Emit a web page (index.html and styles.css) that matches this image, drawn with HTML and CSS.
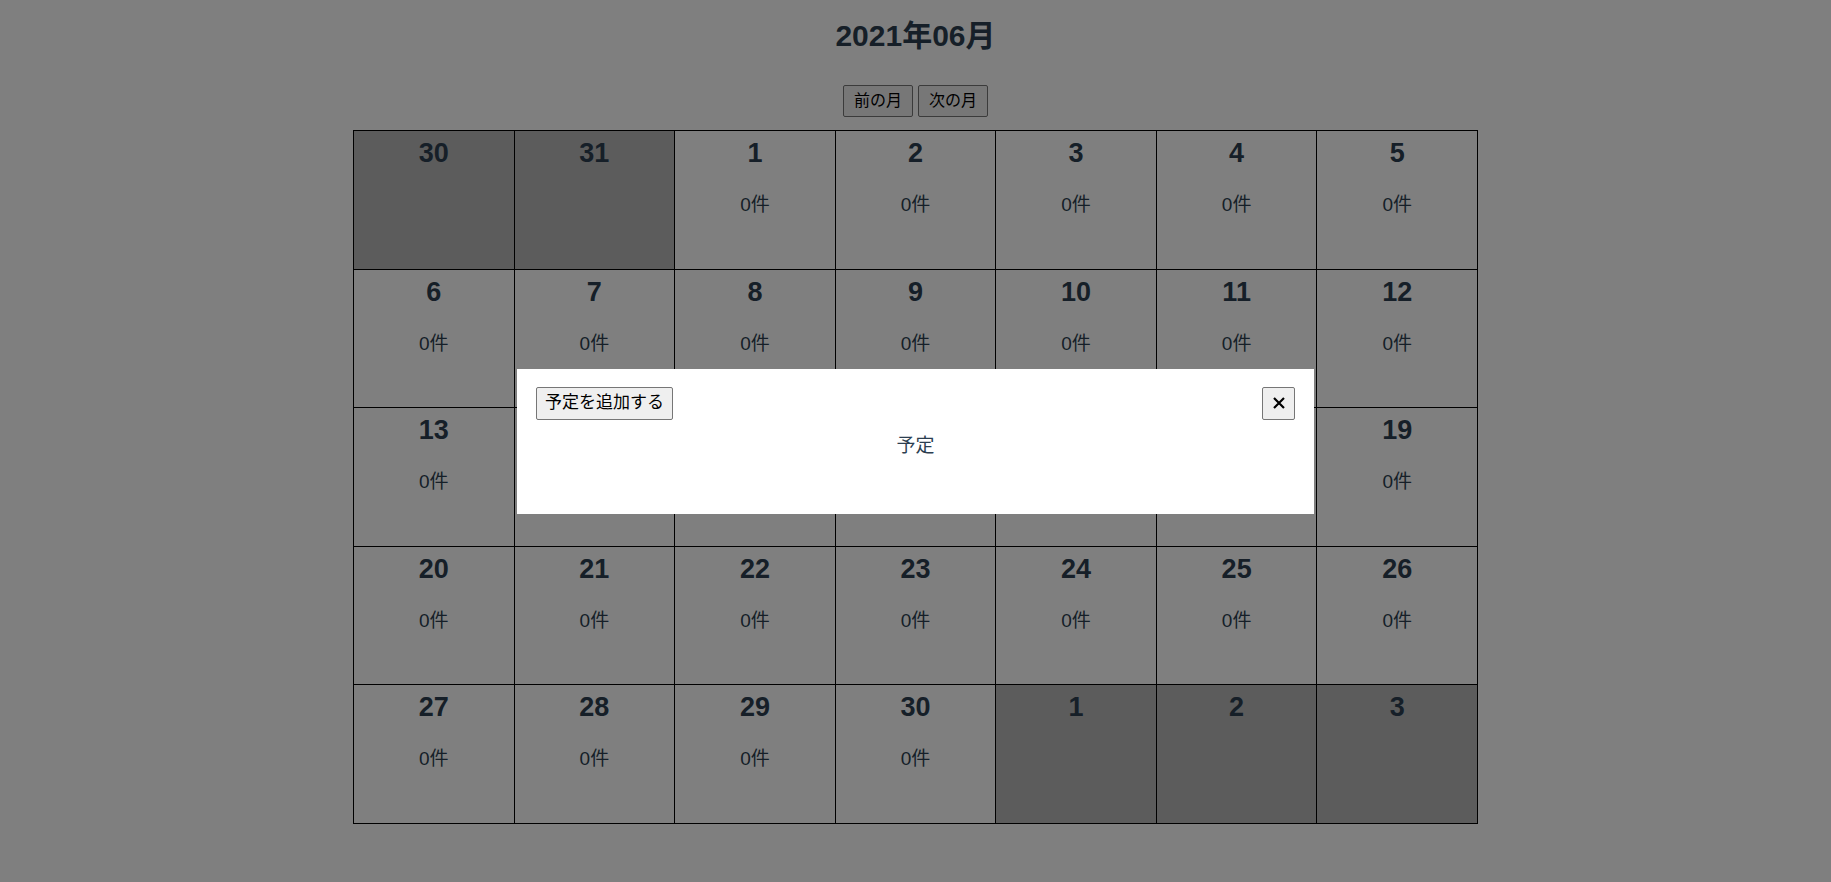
FILE: index.html
```html
<!DOCTYPE html>
<html lang="ja">
<head>
<meta charset="utf-8">
<title>カレンダー</title>
<link rel="stylesheet" href="styles.css">
</head>
<body>
<div class="app">
  <h1 class="title">2021年06月</h1>
  <div class="nav">
    <button class="nav-btn">前の月</button>
    <button class="nav-btn">次の月</button>
  </div>
  <div class="calendar">
    <div class="cell out"><div class="day">30</div></div>
    <div class="cell out"><div class="day">31</div></div>
    <div class="cell"><div class="day">1</div><div class="count">0件</div></div>
    <div class="cell"><div class="day">2</div><div class="count">0件</div></div>
    <div class="cell"><div class="day">3</div><div class="count">0件</div></div>
    <div class="cell"><div class="day">4</div><div class="count">0件</div></div>
    <div class="cell"><div class="day">5</div><div class="count">0件</div></div>

    <div class="cell"><div class="day">6</div><div class="count">0件</div></div>
    <div class="cell"><div class="day">7</div><div class="count">0件</div></div>
    <div class="cell"><div class="day">8</div><div class="count">0件</div></div>
    <div class="cell"><div class="day">9</div><div class="count">0件</div></div>
    <div class="cell"><div class="day">10</div><div class="count">0件</div></div>
    <div class="cell"><div class="day">11</div><div class="count">0件</div></div>
    <div class="cell"><div class="day">12</div><div class="count">0件</div></div>

    <div class="cell"><div class="day">13</div><div class="count">0件</div></div>
    <div class="cell"><div class="day">14</div><div class="count">0件</div></div>
    <div class="cell"><div class="day">15</div><div class="count">0件</div></div>
    <div class="cell"><div class="day">16</div><div class="count">0件</div></div>
    <div class="cell"><div class="day">17</div><div class="count">0件</div></div>
    <div class="cell"><div class="day">18</div><div class="count">0件</div></div>
    <div class="cell"><div class="day">19</div><div class="count">0件</div></div>

    <div class="cell"><div class="day">20</div><div class="count">0件</div></div>
    <div class="cell"><div class="day">21</div><div class="count">0件</div></div>
    <div class="cell"><div class="day">22</div><div class="count">0件</div></div>
    <div class="cell"><div class="day">23</div><div class="count">0件</div></div>
    <div class="cell"><div class="day">24</div><div class="count">0件</div></div>
    <div class="cell"><div class="day">25</div><div class="count">0件</div></div>
    <div class="cell"><div class="day">26</div><div class="count">0件</div></div>

    <div class="cell"><div class="day">27</div><div class="count">0件</div></div>
    <div class="cell"><div class="day">28</div><div class="count">0件</div></div>
    <div class="cell"><div class="day">29</div><div class="count">0件</div></div>
    <div class="cell"><div class="day">30</div><div class="count">0件</div></div>
    <div class="cell out"><div class="day">1</div></div>
    <div class="cell out"><div class="day">2</div></div>
    <div class="cell out"><div class="day">3</div></div>
  </div>
</div>

<div class="overlay">
  <div class="modal">
    <div class="modal-head">
      <button class="modal-btn">予定を追加する</button>
      <button class="modal-btn close" aria-label="閉じる"><svg width="14" height="14" viewBox="0 0 14 14"><path d="M2 2 L12 12 M12 2 L2 12" stroke="#000" stroke-width="2.2" fill="none"/></svg></button>
    </div>
    <div class="modal-body">予定</div>
  </div>
</div>
</body>
</html>
```

FILE: styles.css
```css
html, body {
  margin: 0;
  padding: 0;
  background: #ffffff;
}
body {
  font-family: "Liberation Sans", Arial, "Noto Sans CJK JP", sans-serif;
  color: #2c3e50;
}
.app {
  text-align: center;
  padding-top: 19px;
}
.title {
  margin: 0;
  font-size: 30px;
  line-height: 34px;
  font-weight: bold;
}
.nav {
  display: flex;
  justify-content: center;
  gap: 5px;
  margin-top: 32px;
}
.nav-btn, .modal-btn {
  font-family: "Liberation Sans", Arial, "Noto Sans CJK JP", sans-serif;
  font-size: 16px;
  color: #000;
  background: #efefef;
  border: 1px solid #767676;
  border-radius: 2px;
  padding: 0 10px;
  height: 32px;
  line-height: 30px;
}
.calendar {
  width: 1123px;
  margin: 13px auto 0;
  display: grid;
  grid-template-columns: repeat(7, 1fr);
  grid-auto-rows: 137.6px;
  gap: 1px;
  background: #000;
  border: 1px solid #000;
}
.cell {
  background: #ffffff;
  padding-top: 7px;
}
.cell.out {
  background: #b8b8b8;
}
.day {
  font-size: 27px;
  font-weight: bold;
  line-height: 31px;
}
.count {
  font-size: 19px;
  line-height: 24px;
  margin-top: 24px;
}
.overlay {
  position: fixed;
  inset: 0;
  background: rgba(0, 0, 0, 0.5);
  display: flex;
  align-items: center;
  justify-content: center;
}
.modal {
  width: 797px;
  height: 145px;
  box-sizing: border-box;
  background: #fff;
  padding: 18px 19px;
  text-align: center;
}
.modal-head {
  display: flex;
  justify-content: space-between;
}
.modal-btn {
  height: 33px;
  font-size: 17px;
  padding: 0 8px;
}
.modal-btn.close {
  width: 33px;
  padding: 0;
  display: flex;
  align-items: center;
  justify-content: center;
}
.modal-body {
  font-size: 19px;
  line-height: 28px;
  margin-top: 12px;
  color: #2c3e50;
}
```
